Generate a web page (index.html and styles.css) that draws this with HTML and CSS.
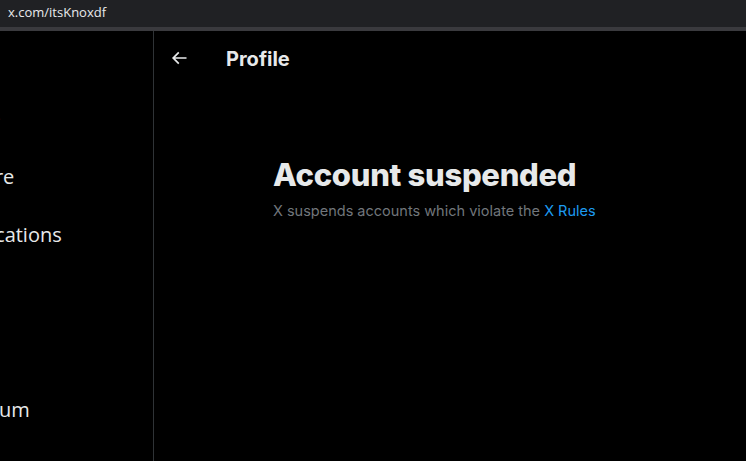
FILE: index.html
```html
<!DOCTYPE html>
<html>
<head>
<meta charset="utf-8">
<link rel="stylesheet" href="styles.css">
</head>
<body>
<div class="urlbar"><span class="url">x.com/itsKnoxdf</span></div>
<div class="strip"></div>
<div class="app">
  <nav class="sidebar">
    <div class="nav-item nav-first">Home</div>
    <div class="nav-item">Explore</div>
    <div class="nav-item">Notifications</div>
    <div class="nav-item">Grok</div>
    <div class="nav-item">Lists</div>
    <div class="nav-item">Premium</div>
  </nav>
  <main class="main">
    <header class="header">
      <span class="back">
        <svg viewBox="0 0 24 24" width="20" height="20"><path fill="currentColor" d="M7.414 13l5.043 5.04-1.414 1.42L3.586 12l7.457-7.46 1.414 1.42L7.414 11H21v2H7.414z"/></svg>
      </span>
      <h2 class="title">Profile</h2>
    </header>
    <section class="empty">
      <h1 class="empty-title">Account suspended</h1>
      <p class="empty-text">X suspends accounts which violate the <a class="link" href="#">X Rules</a></p>
    </section>
  </main>
</div>
</body>
</html>
```
FILE: styles.css
```css
html, body {
  margin: 0;
  padding: 0;
  background: #000;
  height: 100%;
  overflow: hidden;
}
body {
  font-family: Inter, "Noto Sans", sans-serif;
  color: #e7e9ea;
}
.urlbar {
  height: 27px;
  background: #202124;
  display: flex;
  align-items: center;
  padding-left: 8px;
}
.url {
  font-family: "Open Sans", "Noto Sans", sans-serif;
  font-size: 13px;
  color: #e8eaed;
  margin-top: -3px;
}
.strip {
  height: 4px;
  background: #3a3a3e;
}
.app {
  display: flex;
  height: 430px;
}
.sidebar {
  width: 153px;
  flex: none;
  overflow: hidden;
  padding-top: 58px;
}
.nav-item {
  margin-left: -56px;
  height: 58.25px;
  display: flex;
  align-items: center;
  font-size: 20px;
  white-space: nowrap;
  color: #e7e9ea;
  font-family: "Open Sans", sans-serif;
}
.main {
  flex: 1;
  border-left: 1px solid #2f3336;
}
.header {
  height: 53px;
  display: flex;
  align-items: center;
  padding-left: 7px;
}
.back {
  width: 36px;
  height: 36px;
  display: flex;
  align-items: center;
  justify-content: center;
  color: #e7e9ea;
  margin-right: 29px;
}
.title {
  margin: 0 0 -2px;
  font-size: 20px;
  font-weight: 700;
  color: #e7e9ea;
}
.empty {
  padding: 73px 0 0 119px;
}
.empty-title {
  margin: 0;
  font-size: 31px;
  font-weight: 800;
  line-height: 36px;
  color: #e7e9ea;
  letter-spacing: -0.3px;
}
.empty-text {
  margin: 8px 0 0;
  font-size: 14.5px;
  line-height: 20px;
  color: #71767b;
}
.link {
  color: #1d9bf0;
  text-decoration: none;
}
```
